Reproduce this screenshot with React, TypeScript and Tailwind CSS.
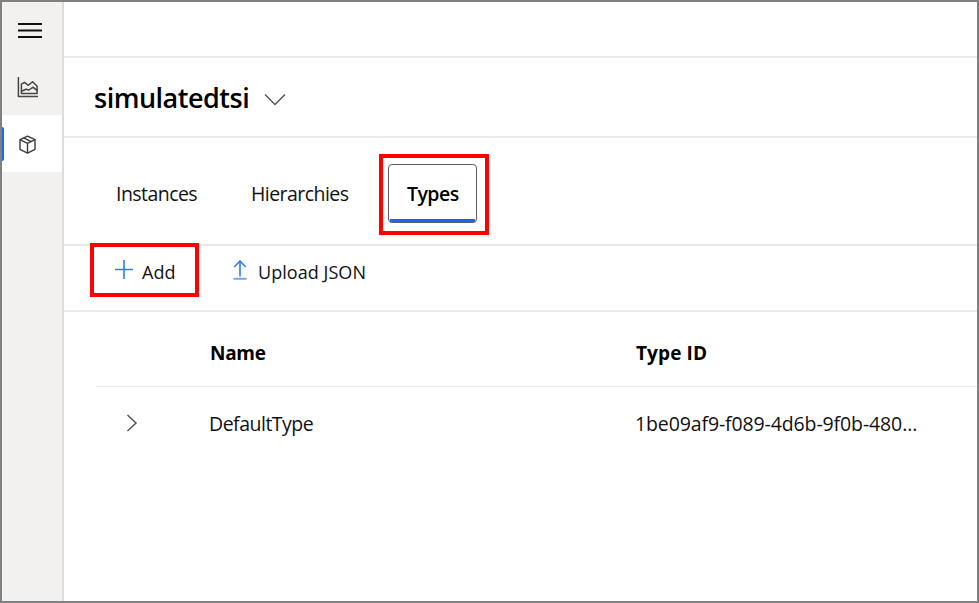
function MenuIcon() {
  return (
    <svg width="24" height="17" viewBox="0 0 24 17" fill="none" stroke="#111" strokeWidth="2">
      <path d="M0 2h24M0 8.5h24M0 15h24" />
    </svg>
  );
}

function ChartIcon() {
  return (
    <svg width="22" height="22" viewBox="0 0 22 22" fill="none" stroke="#484644" strokeWidth="1.5" strokeLinejoin="round">
      <path d="M1.4 1v19.4H21" />
      <path d="M4.4 17.6V8.2L7.4 6.3L11.4 9.3L15.6 5.7L20.1 10.2V17.6Z" />
      <path d="M4.4 15.2L9 13.2L12 14L16 11.2L20.1 14.6" />
    </svg>
  );
}

function CubeIcon() {
  return (
    <svg width="18" height="20" viewBox="0 0 18 20" fill="none" stroke="#3b3a39" strokeWidth="1.4" strokeLinejoin="round">
      <path d="M9.5 1.2L17 4.6v9.8L9.5 18.2L2 14.4V4.6Z" />
      <path d="M2 4.6L9.5 8.3L17 4.6M9.5 8.3v9.7M5.6 2.9L13.3 6.6" />
    </svg>
  );
}

export default function App() {
  return (
    <div className="flex h-[603px] w-[979px] overflow-hidden border-2 border-[#808080] bg-white font-['Open_Sans','Noto_Sans',sans-serif] text-[19.5px] text-[#111]">
      <aside className="flex w-[62px] shrink-0 flex-col border-r-2 border-[#dddddd] bg-[#f2f1f0]">
        <div className="h-14 pt-5 pl-4"><MenuIcon /></div>
        <div className="h-[57px] pt-[18px] pl-[15px]"><ChartIcon /></div>
        <div className="flex h-[57px] items-center bg-white">
          <div className="h-[34px] w-0.5 rounded-r bg-[#1267ff]" />
          <div className="ml-[14px] pt-0.5"><CubeIcon /></div>
        </div>
      </aside>
      <main className="flex min-w-0 flex-1 flex-col">
        <div className="h-14 border-b-2 border-[#eaeaea]" />
        <header className="flex h-20 items-center border-b-2 border-[#eaeaea] pl-[30px]">
          <h1 className="w-[170px] pt-0.5 text-[27px] leading-[38px] font-semibold tracking-[-0.5px] whitespace-nowrap text-black">simulatedtsi</h1>
          <svg className="mt-[6px]" width="22" height="14" viewBox="0 0 22 14" fill="none" stroke="#555" strokeWidth="1.5">
            <path d="M1 1.5L11 11.5L21 1.5" />
          </svg>
        </header>
        <nav className="flex h-[108px] border-b-2 border-[#eaeaea] pl-[52px] leading-[26px] tracking-[-0.55px] whitespace-nowrap">
          <span className="mt-[43px] w-[135px]">Instances</span>
          <span className="mt-[43px] w-[137px]">Hierarchies</span>
          <div className="relative mt-[26px] h-[59px] w-[89px] rounded-[4px] border-[1.5px] border-[#606060] pt-4 pl-[18px] font-semibold text-black">
            Types
            <div className="absolute right-px bottom-0 left-px h-[3px] bg-[#1267ff]" />
            <div className="absolute -top-[11px] -left-[10px] h-[81px] w-[110px] border-4 border-[#fe0000]" />
          </div>
        </nav>
        <div className="relative flex h-[66px] border-b-2 border-[#eaeaea] pl-[51px] text-[18px] leading-[24px] whitespace-nowrap">
          <svg className="mt-[14px]" width="18" height="19" viewBox="0 0 18 19" fill="none" stroke="#2f7bf6" strokeWidth="1.6">
            <path d="M9 0v19M0 9.5h18" />
          </svg>
          <span className="mt-[14px] ml-[9px] w-[91px]">Add</span>
          <svg className="mt-[14px]" width="14" height="20" viewBox="0 0 14 20" fill="none" stroke="#2f7bf6" strokeWidth="1.6">
            <path d="M7 1v15.5M1.2 7L7 1l5.8 6" /><path stroke="#74a7f9" strokeWidth="2" d="M0.5 18.8h13" />
          </svg>
          <span className="mt-[14px] ml-[11px] tracking-[0.05px]">Upload JSON</span>
          <div className="absolute top-[-3px] left-[26px] h-[54px] w-[109px] border-4 border-[#fe0000]" />
        </div>
        <div className="ml-8">
          <div className="flex h-[75px] border-b border-[#eaeaea] pt-[28px] pl-[114px] text-[19px] leading-[26px] font-bold whitespace-nowrap text-black">
            <span className="w-[426px] tracking-[-0.3px]">Name</span>
            <span className="tracking-[0.1px]">Type ID</span>
          </div>
          <div className="flex pt-6 pl-[30px] leading-[26px] whitespace-nowrap">
            <svg className="mt-[3px]" width="12" height="18" viewBox="0 0 12 18" fill="none" stroke="#555" strokeWidth="1.5">
              <path d="M1.5 1L10 9L1.5 17" />
            </svg>
            <span className="ml-[71px] w-[426px] tracking-[-0.5px]">DefaultType</span>
            <span className="tracking-[-0.12px]">1be09af9-f089-4d6b-9f0b-480...</span>
          </div>
        </div>
      </main>
    </div>
  );
}
